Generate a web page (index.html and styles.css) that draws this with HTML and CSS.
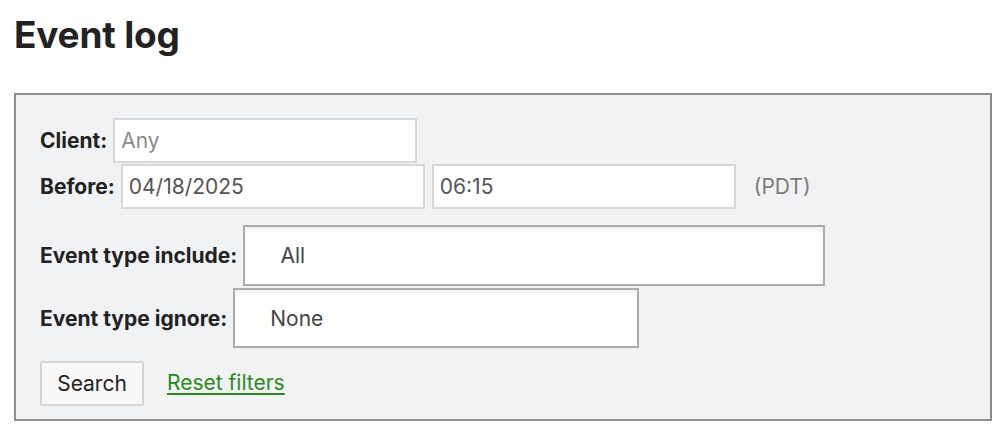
FILE: index.html
```html
<!DOCTYPE html>
<html lang="en">
<head>
<meta charset="utf-8">
<title>Event log</title>
<link rel="stylesheet" href="styles.css">
</head>
<body>
<div class="page">
  <h1 class="title">Event log</h1>
  <form class="filters">
    <div class="row">
      <label class="label" for="client">Client:</label>
      <input class="field" id="client" type="text" placeholder="Any">
    </div>
    <div class="row row-tight">
      <label class="label" for="date">Before:</label>
      <input class="field" id="date" type="text" value="04/18/2025">
      <input class="field field-time" type="text" value="06:15">
      <span class="tz">(PDT)</span>
    </div>
    <div class="row row-select">
      <label class="label">Event type include:</label>
      <div class="select select-include">All</div>
    </div>
    <div class="row row-select2">
      <label class="label">Event type ignore:</label>
      <div class="select select-ignore">None</div>
    </div>
    <div class="row row-actions">
      <button class="btn" type="button">Search</button>
      <a class="reset" href="#">Reset filters</a>
    </div>
  </form>
</div>
</body>
</html>
```
FILE: styles.css
```css
html, body {
  margin: 0;
  padding: 0;
  background: #ffffff;
}
body {
  font-family: Inter, "Noto Sans", "Liberation Sans", sans-serif;
  color: #222222;
}
.page {
  padding: 13px 7px 0 14px;
}
.title {
  margin: 0 0 36px;
  font-size: 37px;
  line-height: 44px;
  font-weight: 700;
  color: #222222;
  letter-spacing: -0.2px;
}
.filters {
  box-sizing: border-box;
  width: 978px;
  border: 2px solid #8c8e8e;
  background: #f1f2f4;
  padding: 23px 24px 13px;
}
.row {
  display: flex;
  align-items: center;
}
.label {
  font-size: 21px;
  font-weight: 700;
  color: #222222;
  margin-right: 6px;
}
.field {
  box-sizing: border-box;
  width: 304px;
  height: 45px;
  border: 2px solid #d7d7d7;
  background: #ffffff;
  padding: 0 6px;
  font-family: inherit;
  font-size: 21px;
  color: #555555;
  outline: none;
}
.field::placeholder {
  color: #8a8a8a;
}
.row-tight {
  margin-top: 1px;
}
.field-time {
  margin-left: 7px;
}
.tz {
  margin-left: 18px;
  font-size: 21px;
  color: #7a7a7a;
}
.row-select {
  margin-top: 16px;
}
.row-select2 {
  margin-top: 2px;
}
.select {
  box-sizing: border-box;
  display: flex;
  align-items: center;
  border: 2px solid #ababab;
  background: #ffffff;
  box-shadow: inset 0 6px 6px -4px rgba(0, 0, 0, 0.08);
  font-size: 21px;
  color: #444444;
  padding-left: 35px;
}
.select-include {
  width: 582px;
  height: 61px;
}
.select-ignore {
  width: 406px;
  height: 60px;
}
.row-actions {
  margin-top: 13px;
}
.btn {
  box-sizing: border-box;
  width: 104px;
  height: 45px;
  border: 2px solid #d4d4d4;
  border-radius: 3px;
  background: #f8f8f8;
  font-family: inherit;
  font-size: 21px;
  color: #222222;
  padding: 0;
}
.reset {
  margin-left: 23px;
  margin-top: -2px;
  font-size: 21px;
  color: #2a8a1a;
  text-decoration: underline;
  text-underline-offset: 3px;
}
```
